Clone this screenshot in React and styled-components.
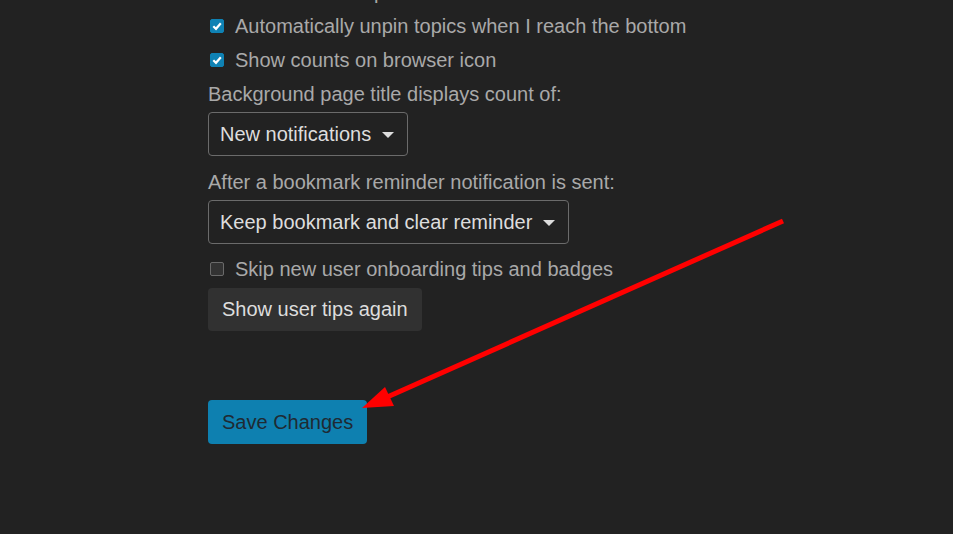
import React from "react";
import styled, { createGlobalStyle } from "styled-components";

const Global = createGlobalStyle`
  html, body {
    margin: 0;
    padding: 0;
    background: #222222;
    overflow: hidden;
  }
  body {
    font-family: "Liberation Sans", Arial, sans-serif;
  }
`;

const Page = styled.div`
  position: relative;
  width: 953px;
  height: 534px;
  overflow: hidden;
`;

const Form = styled.div`
  display: flex;
  flex-direction: column;
  align-items: flex-start;
  margin-top: -25px;
  padding-left: 208px;
  font-size: 20px;
  color: #a9a9a9;
`;

const Row = styled.label`
  display: flex;
  align-items: center;
  gap: 11px;
  height: 34px;
  margin-top: ${(p) => p.$mt || 0}px;
`;

const Box = styled.span`
  box-sizing: border-box;
  flex: 0 0 14px;
  width: 14px;
  height: 14px;
  margin-left: 2px;
  border-radius: 2px;
  display: inline-flex;
  align-items: center;
  justify-content: center;
  background: ${(p) => (p.$on ? "#0f82b4" : "#333333")};
  border: 1px solid ${(p) => (p.$on ? "#0f82b4" : "#6a6a6a")};
`;

const Label = styled.div`
  height: 34px;
  display: flex;
  align-items: center;
  margin-top: ${(p) => p.$mt || 0}px;
`;

const Select = styled.div`
  box-sizing: border-box;
  display: flex;
  align-items: center;
  gap: 11px;
  height: 44px;
  padding: 0 13px 0 11px;
  margin-top: 1px;
  border: 1px solid #6b6b6b;
  border-radius: 4px;
  color: #dddddd;
`;

const Caret = styled.span`
  width: 0;
  height: 0;
  border-left: 6px solid transparent;
  border-right: 6px solid transparent;
  border-top: 6px solid #dddddd;
  margin-top: 2px;
`;

const Button = styled.button`
  box-sizing: border-box;
  height: ${(p) => (p.$primary ? 44 : 43)}px;
  padding: 0 14px;
  margin-top: ${(p) => p.$mt || 0}px;
  border: none;
  border-radius: 4px;
  font-family: inherit;
  font-size: 20px;
  background: ${(p) => (p.$primary ? "#0e80b0" : "#313131")};
  color: ${(p) => (p.$primary ? "#1f2a33" : "#dddddd")};
`;

const Overlay = styled.svg`
  position: absolute;
  left: 0;
  top: 0;
  pointer-events: none;
`;

const Check = ({ on, children, mt }) => (
  <Row $mt={mt}>
    <Box $on={on}>
      {on && (
        <svg width="10" height="10" viewBox="0 0 10 10">
          <path d="M1.3 5.2 L4 7.8 L8.8 2.3" fill="none" stroke="#fff" strokeWidth="2.2" />
        </svg>
      )}
    </Box>
    {children}
  </Row>
);

export default function App() {
  return (
    <Page>
      <Global />
      <Form>
        <Check on>Hide the new topic count</Check>
        <Check on>Automatically unpin topics when I reach the bottom</Check>
        <Check on>Show counts on browser icon</Check>
        <Label>Background page title displays count of:</Label>
        <Select>
          New notifications <Caret />
        </Select>
        <Label $mt={9}>After a bookmark reminder notification is sent:</Label>
        <Select>
          Keep bookmark and clear reminder <Caret />
        </Select>
        <Check mt={8}>Skip new user onboarding tips and badges</Check>
        <Button $mt={2}>Show user tips again</Button>
        <Button $primary $mt={69}>Save Changes</Button>
      </Form>
      <Overlay width="953" height="534">
        <line x1="783" y1="221" x2="385" y2="398" stroke="#ff0000" strokeWidth="5" />
        <polygon points="362,408 385,387 394,406" fill="#ff0000" />
      </Overlay>
    </Page>
  );
}
